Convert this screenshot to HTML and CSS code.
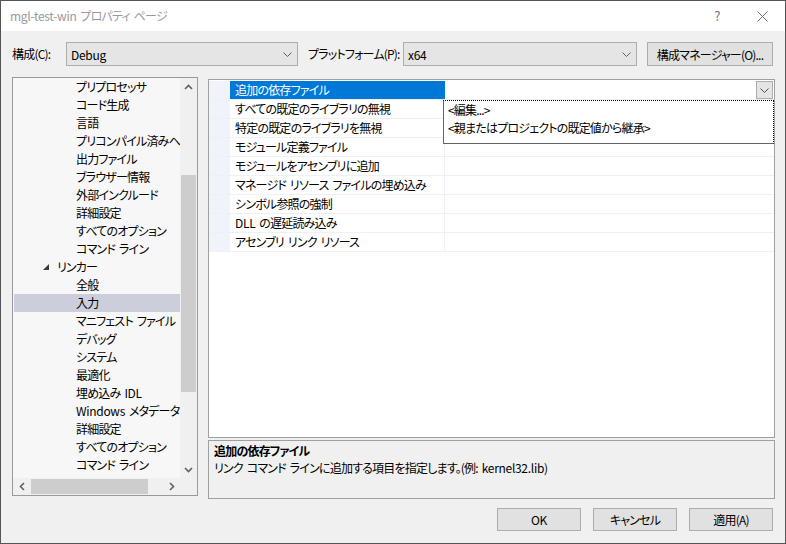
FILE: index.html
```html
<!DOCTYPE html>
<html lang="ja">
<head>
<meta charset="utf-8">
<title>mgl-test-win プロパティ ページ</title>
<link rel="stylesheet" href="styles.css">
</head>
<body>
<div class="window">
  <div class="titlebar">
    <span class="title"><span class="latin">mgl-test-win</span> プロパティ ページ</span>
    <span class="tb-help">?</span>
    <span class="tb-close"><svg width="11" height="11" viewBox="0 0 11 11"><path d="M.5.5 10.5 10.5M10.5.5 .5 10.5" stroke="#6a6a6a" stroke-width="1" fill="none"/></svg></span>
  </div>

  <div class="toolbar">
    <span class="lbl lbl-config">構成(C):</span>
    <div class="combo combo-config"><span class="latin">Debug</span><svg width="9" height="5" viewBox="0 0 9 5"><path d="M.5.5 4.5 4.5 8.5.5" fill="none" stroke="#606060"/></svg></div>
    <span class="lbl lbl-platform">プラットフォーム(P):</span>
    <div class="combo combo-platform"><span class="latin">x64</span><svg width="9" height="5" viewBox="0 0 9 5"><path d="M.5.5 4.5 4.5 8.5.5" fill="none" stroke="#606060"/></svg></div>
    <button class="btn btn-manager">構成マネージャー(O)...</button>
  </div>

  <div class="main">
    <div class="tree">
      <div class="tree-body">
        <div class="tree-list">
          <div class="trow">プリプロセッサ</div>
          <div class="trow">コード生成</div>
          <div class="trow">言語</div>
          <div class="trow">プリコンパイル済みヘッダー</div>
          <div class="trow">出力ファイル</div>
          <div class="trow">ブラウザー情報</div>
          <div class="trow">外部インクルード</div>
          <div class="trow">詳細設定</div>
          <div class="trow">すべてのオプション</div>
          <div class="trow">コマンド ライン</div>
          <div class="trow trow-l1"><svg class="expander" width="6" height="6" viewBox="0 0 6 6"><path d="M6 0V6H0Z" fill="#3c3c3c"/></svg><span>リンカー</span></div>
          <div class="trow">全般</div>
          <div class="trow trow-sel">入力</div>
          <div class="trow">マニフェスト ファイル</div>
          <div class="trow">デバッグ</div>
          <div class="trow">システム</div>
          <div class="trow">最適化</div>
          <div class="trow">埋め込み <span class="latin">IDL</span></div>
          <div class="trow"><span class="latin">Windows</span> メタデータ</div>
          <div class="trow">詳細設定</div>
          <div class="trow">すべてのオプション</div>
          <div class="trow">コマンド ライン</div>
        </div>
        <div class="vscroll">
          <div class="sb-btn"><svg width="9" height="6" viewBox="0 0 9 6"><path d="M1 5 4.5 1.5 8 5" stroke="#606060" stroke-width="1.6" fill="none"/></svg></div>
          <div class="vtrack"><div class="vthumb"></div></div>
          <div class="sb-btn"><svg width="9" height="6" viewBox="0 0 9 6"><path d="M1 1 4.5 4.5 8 1" stroke="#606060" stroke-width="1.6" fill="none"/></svg></div>
        </div>
      </div>
      <div class="hscroll-row">
        <div class="hscroll">
          <div class="sb-btn"><svg width="6" height="9" viewBox="0 0 6 9"><path d="M5 1 1.5 4.5 5 8" stroke="#606060" stroke-width="1.6" fill="none"/></svg></div>
          <div class="htrack"><div class="hthumb"></div></div>
          <div class="sb-btn"><svg width="6" height="9" viewBox="0 0 6 9"><path d="M1 1 4.5 4.5 1 8" stroke="#606060" stroke-width="1.6" fill="none"/></svg></div>
        </div>
        <div class="corner"></div>
      </div>
    </div>

    <div class="right">
      <div class="grid">
        <div class="prow prow-sel">
          <div class="gutter"></div>
          <div class="pname">追加の依存ファイル</div>
          <div class="pval pval-edit"><span class="dd-btn"><svg width="9" height="5" viewBox="0 0 9 5"><path d="M.5.5 4.5 4.5 8.5.5" fill="none" stroke="#505050"/></svg></span></div>
        </div>
        <div class="prow"><div class="gutter"></div><div class="pname">すべての既定のライブラリの無視</div><div class="pval"></div></div>
        <div class="prow"><div class="gutter"></div><div class="pname">特定の既定のライブラリを無視</div><div class="pval"></div></div>
        <div class="prow"><div class="gutter"></div><div class="pname">モジュール定義ファイル</div><div class="pval"></div></div>
        <div class="prow"><div class="gutter"></div><div class="pname">モジュールをアセンブリに追加</div><div class="pval"></div></div>
        <div class="prow"><div class="gutter"></div><div class="pname">マネージド リソース ファイルの埋め込み</div><div class="pval"></div></div>
        <div class="prow"><div class="gutter"></div><div class="pname">シンボル参照の強制</div><div class="pval"></div></div>
        <div class="prow"><div class="gutter"></div><div class="pname"><span class="latin">DLL</span> の遅延読み込み</div><div class="pval"></div></div>
        <div class="prow"><div class="gutter"></div><div class="pname">アセンブリ リンク リソース</div><div class="pval"></div></div>

        <div class="dropdown">
          <div class="dd-item">&lt;編集...&gt;</div>
          <div class="dd-item">&lt;親またはプロジェクトの既定値から継承&gt;</div>
        </div>
      </div>
      <div class="desc">
        <div class="desc-title">追加の依存ファイル</div>
        <div class="desc-text">リンク コマンド ラインに追加する項目を指定します。(例: <span class="latin">kernel32.lib</span>)</div>
      </div>
    </div>
  </div>

  <div class="buttons">
    <button class="btn btn-dlg"><span class="latin">OK</span></button>
    <button class="btn btn-dlg">キャンセル</button>
    <button class="btn btn-dlg">適用(A)</button>
  </div>
</div>
</body>
</html>
```

FILE: styles.css
```css
html, body {
  margin: 0;
  padding: 0;
  background: #f0f0f0;
}

body {
  font-family: "Noto Sans CJK JP", "Noto Sans", sans-serif;
  font-size: 12px;
  font-feature-settings: "palt";
  letter-spacing: -0.8px;
  word-spacing: 2px;
  color: #000;
}

.latin {
  letter-spacing: -0.3px;
}

.window {
  width: 786px;
  height: 544px;
  box-sizing: border-box;
  border: 1px solid #555;
  background: #f0f0f0;
  display: flex;
  flex-direction: column;
  overflow: hidden;
}

/* title bar */
.titlebar {
  flex: none;
  height: 30px;
  background: #fff;
  display: flex;
  align-items: center;
}

.title {
  flex: 1;
  padding-left: 9px;
  color: #999;
  line-height: 30px;
}

.tb-help {
  width: 44px;
  text-align: center;
  color: #707070;
  font-size: 13px;
  line-height: 30px;
}

.tb-close {
  width: 46px;
  height: 30px;
  display: flex;
  align-items: center;
  justify-content: center;
}

/* toolbar */
.toolbar {
  flex: none;
  display: flex;
  align-items: center;
  padding: 11px 0 0 11px;
}

.lbl {
  line-height: 24px;
  white-space: nowrap;
}

.lbl-config {
  width: 54px;
}

.lbl-platform {
  margin-left: 10px;
  width: 95px;
}

.combo {
  box-sizing: border-box;
  height: 24px;
  border: 1px solid #adadad;
  background: #e5e5e5;
  display: flex;
  align-items: center;
  justify-content: space-between;
  padding: 0 5px 0 4px;
}

.combo-config {
  width: 232px;
}

.combo-platform {
  width: 234px;
}

.btn {
  box-sizing: border-box;
  border: 1px solid #adadad;
  background: #e1e1e1;
  font: inherit;
  letter-spacing: inherit;
  word-spacing: inherit;
  color: #000;
  padding: 0;
  margin: 0;
  white-space: nowrap;
}

.btn-manager {
  margin-left: 10px;
  width: 126px;
  height: 24px;
}

/* main area */
.main {
  flex: none;
  display: flex;
  align-items: flex-start;
  gap: 10px;
  padding-left: 11px;
  margin-top: 11px;
}

/* tree */
.tree {
  width: 186px;
  height: 419px;
  box-sizing: border-box;
  border: 1px solid #999;
  background: #f7f7f7;
  display: flex;
  flex-direction: column;
}

.tree-body {
  display: flex;
  height: 400px;
}

.tree-list {
  flex: 1;
  overflow: hidden;
}

.trow {
  height: 18px;
  line-height: 18px;
  white-space: nowrap;
  padding-left: 63px;
}

.trow-l1 {
  display: flex;
  align-items: center;
  padding-left: 30px;
}

.expander {
  margin-right: 8px;
  flex: none;
}

.trow-sel {
  background: #cccedb;
  margin-left: 1px;
  padding-left: 62px;
}

.vscroll {
  width: 17px;
  background: #f0f0f0;
  display: flex;
  flex-direction: column;
}

.sb-btn {
  flex: none;
  width: 17px;
  height: 17px;
  display: flex;
  align-items: center;
  justify-content: center;
}

.vtrack {
  flex: 1;
}

.vthumb {
  margin: 80px 1px 0;
  height: 217px;
  background: #cdcdcd;
}

.hscroll-row {
  display: flex;
  height: 17px;
}

.hscroll {
  flex: 1;
  display: flex;
  background: #f0f0f0;
}

.htrack {
  flex: 1;
}

.hthumb {
  margin: 1px 0 0 1px;
  width: 117px;
  height: 15px;
  background: #cdcdcd;
}

.corner {
  width: 17px;
  background: #f0f0f0;
}

/* right column */
.right {
  width: 567px;
  margin-top: 2px;
  display: flex;
  flex-direction: column;
  gap: 2px;
}

.grid {
  position: relative;
  height: 359px;
  box-sizing: border-box;
  border: 1px solid #a0a0a0;
  background: #fff;
  padding-top: 1px;
}

.prow {
  display: flex;
  height: 19px;
  box-sizing: border-box;
  border-bottom: 1px solid #edf0f6;
}

.gutter {
  width: 21px;
  flex: none;
  background: #f0f4fa;
}

.pname {
  width: 215px;
  flex: none;
  box-sizing: border-box;
  padding-left: 5px;
  line-height: 18px;
  white-space: nowrap;
  overflow: hidden;
  border-right: 1px solid #edf0f6;
}

.pval {
  flex: 1;
}

.prow-sel .pname {
  background: #0078d7;
  color: #fff;
  border-right-color: #0078d7;
}

.pval-edit {
  display: flex;
  justify-content: flex-end;
  align-items: flex-start;
}

.dd-btn {
  box-sizing: border-box;
  width: 17px;
  height: 18px;
  margin-right: 1px;
  border: 1px solid #adadad;
  background: #e5e5e5;
  display: flex;
  align-items: center;
  justify-content: center;
}

.dropdown {
  position: absolute;
  left: 234px;
  top: 20px;
  width: 331px;
  height: 44px;
  box-sizing: border-box;
  background: #fff;
  border-left: 1px solid #646464;
  border-bottom: 1px solid #646464;
  border-top: 1px dotted #000;
  border-right: 1px dotted #000;
  padding-left: 4px;
}

.dd-item {
  line-height: 18px;
  white-space: nowrap;
}

/* description */
.desc {
  height: 59px;
  box-sizing: border-box;
  border: 1px solid #a0a0a0;
  background: #f0f0f0;
  padding: 1px 5px;
  line-height: 17px;
}

.desc-title {
  font-weight: bold;
}

/* bottom buttons */
.buttons {
  flex: none;
  display: flex;
  justify-content: flex-end;
  gap: 12px;
  padding-right: 12px;
  margin-top: 9px;
}

.btn-dlg {
  width: 84px;
  height: 23px;
}
```
